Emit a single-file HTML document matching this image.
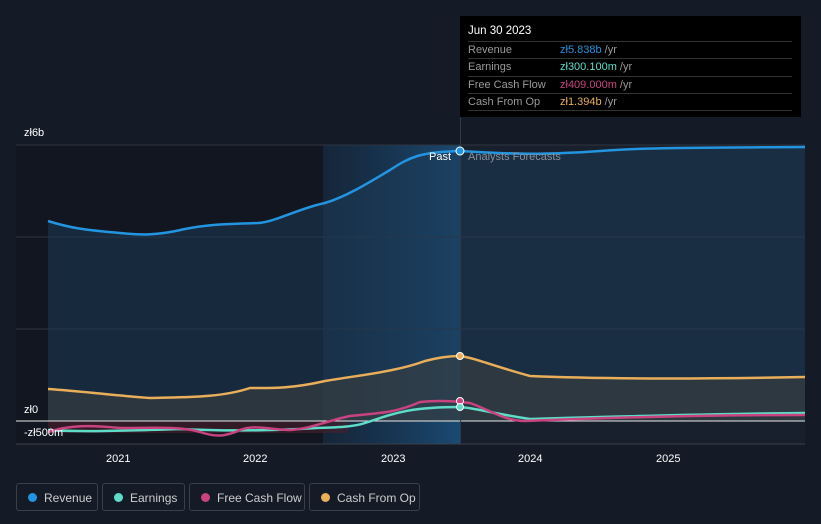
<!DOCTYPE html><html><head><style>
body{margin:0;width:821px;height:524px;background:#151b26;font-family:"Liberation Sans",sans-serif;overflow:hidden;position:relative}
.tt{position:absolute;left:460px;top:16px;width:341px;height:101px;background:#000;color:#fff;font-size:11px}
.tt .h{position:absolute;left:8px;top:9px;font-size:11.5px}
.row{position:absolute;left:8px;width:324px;border-top:1px solid #333;height:17px;line-height:17px;color:#999}
.row span{position:absolute;left:92px}
.leg{position:absolute;top:483px;height:28px;border:1px solid #3a404b;border-radius:3px;color:#ccc;font-size:12px;line-height:28px;box-sizing:border-box;padding-left:27px}
.leg i{position:absolute;left:11px;top:9px;width:9px;height:9px;border-radius:50%}
</style></head><body>
<svg width="821" height="524" style="position:absolute;left:0;top:0">
<defs><linearGradient id="hl" x1="0" x2="1"><stop offset="0" stop-color="#16314d" stop-opacity=".5"/><stop offset="1" stop-color="#1a4a72"/></linearGradient></defs>
<rect x="16" y="145" width="307" height="299" fill="#111620"/>
<rect x="323" y="145" width="137" height="299" fill="url(#hl)"/>
<rect x="460" y="145" width="345" height="299" fill="#18202d"/>
<g stroke="#2e3440" stroke-width="1"><line x1="16" y1="145" x2="805" y2="145"/><line x1="16" y1="237" x2="805" y2="237"/><line x1="16" y1="329" x2="805" y2="329"/><line x1="16" y1="444" x2="805" y2="444" stroke="#3a404b"/></g>
<path d="M48,221 C70,228 85,230 120,233 C140,235 155,236 185,229 C205,225 220,224 258,223 C275,222 300,208 325,203 C345,197 365,185 390,170 C410,157 420,152 460,151 C500,153 530,156 600,151 C640,148 660,148 805,147 L805,421 L48,421Z" fill="#1e3a56" opacity=".55"/>
<path d="M48,389 C80,391 120,396 150,398 C185,397 220,398 250,388 C270,388 290,389 325,381 C360,375 395,372 425,361 C440,357 450,356 460,356 C475,358 490,365 530,376 C600,379 700,379 805,377 L805,421 L48,421Z" fill="#3a3f3f" opacity=".6"/>
<rect x="48" y="421" width="300" height="12" fill="#4a1f2c" opacity=".6"/>
<line x1="16" y1="421" x2="805" y2="421" stroke="#e8e8e8" stroke-width="1"/>
<line x1="460.5" y1="16" x2="460.5" y2="444" stroke="#2e3a4a"/>
<g fill="none" stroke-width="2.5">
<path d="M48,221 C70,228 85,230 120,233 C140,235 155,236 185,229 C205,225 220,224 258,223 C275,222 300,208 325,203 C345,197 365,185 390,170 C410,157 420,152 460,151 C500,153 530,156 600,151 C640,148 660,148 805,147" stroke="#2394df"/>
<path d="M48,389 C80,391 120,396 150,398 C185,397 220,398 250,388 C270,388 290,389 325,381 C360,375 395,372 425,361 C440,357 450,356 460,356 C475,358 490,365 530,376 C600,379 700,379 805,377" stroke="#e9ae5a"/>
<path d="M48,430 C80,432 120,431 180,429 C220,431 255,431 300,429 C330,427 350,428 365,423 C395,413 410,407 460,407 C475,408 490,413 530,419 C600,417 700,414 805,413" stroke="#5fdcc8"/>
<path d="M48,432 C70,425 90,425 120,428 C150,428 180,426 200,432 C215,437 225,437 240,430 C255,424 270,430 290,430 C310,429 330,420 350,416 C380,413 395,413 420,402 C440,400 455,401 470,403 C490,410 505,421 525,421 C600,418 700,415 805,415" stroke="#c8437f"/>
</g>
<circle cx="460" cy="151" r="4" fill="#2394df" stroke="#fff" stroke-width="1"/>
<circle cx="460" cy="356" r="3.5" fill="#e9ae5a" stroke="#fff" stroke-width="1"/>
<circle cx="460" cy="401" r="3.5" fill="#c8437f" stroke="#fff" stroke-width="1"/>
<circle cx="460" cy="407" r="3.5" fill="#5fdcc8" stroke="#fff" stroke-width="1"/>
<g font-size="11" fill="#fff"><text x="24" y="136">zł6b</text><text x="24" y="413">zł0</text><text x="24" y="436">-zł500m</text>
<text x="106" y="462">2021</text><text x="243" y="462">2022</text><text x="381" y="462">2023</text><text x="518" y="462">2024</text><text x="656" y="462">2025</text>
<text x="429" y="160">Past</text><text x="468" y="160" fill="#8a8f98">Analysts Forecasts</text></g>
</svg>
<div class="tt"><div class="h">Jun 30 2023</div>
<div class="row" style="top:25px">Revenue<span><b style="font-weight:normal;color:#2394df">zł5.838b</b> /yr</span></div>
<div class="row" style="top:42px">Earnings<span><b style="font-weight:normal;color:#5fdcc8">zł300.100m</b> /yr</span></div>
<div class="row" style="top:60px">Free Cash Flow<span><b style="font-weight:normal;color:#c8437f">zł409.000m</b> /yr</span></div>
<div class="row" style="top:77px">Cash From Op<span><b style="font-weight:normal;color:#e9ae5a">zł1.394b</b> /yr</span></div>
<div class="row" style="top:94px;height:0"></div></div>
<div class="leg" style="left:16px;width:82px"><i style="background:#2394df"></i>Revenue</div>
<div class="leg" style="left:102px;width:83px"><i style="background:#5fdcc8"></i>Earnings</div>
<div class="leg" style="left:189px;width:116px"><i style="background:#c8437f"></i>Free Cash Flow</div>
<div class="leg" style="left:309px;width:111px"><i style="background:#e9ae5a"></i>Cash From Op</div>
</body></html>
